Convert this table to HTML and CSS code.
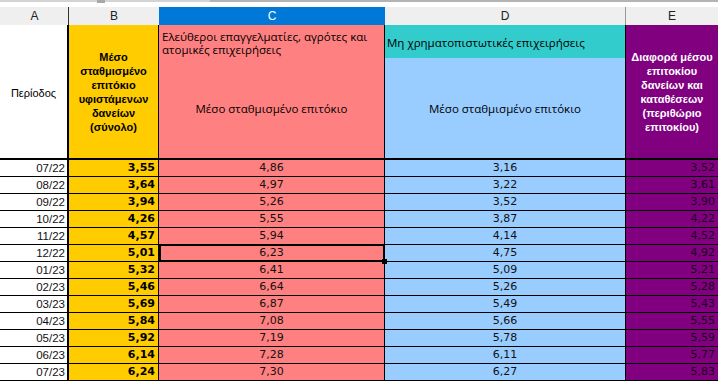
FILE: index.html
```html
<!DOCTYPE html>
<html lang="el">
<head>
<meta charset="utf-8">
<title>Επιτόκια</title>
<link rel="stylesheet" href="styles.css">
</head>
<body>
<div class="topbar">
  <span class="seg seg-a"></span><span class="seg seg-thumb"></span><span class="seg seg-b"></span><span class="seg seg-c"></span>
</div>
<div class="colheads">
  <div class="ch ch-a">A</div>
  <div class="ch ch-b">B</div>
  <div class="ch ch-c">C</div>
  <div class="ch ch-d">D</div>
  <div class="ch ch-e">E</div>
</div>
<div class="sheet">
  <div class="cell h-a">Περίοδος</div>
  <div class="cell h-b">Μέσο σταθμισμένο επιτόκιο υφιστάμενων δανείων (σύνολο)</div>
  <div class="cell h-c1">Ελεύθεροι επαγγελματίες, αγρότες και ατομικές επιχειρήσεις</div>
  <div class="cell h-d1">Μη χρηματοπιστωτικές επιχειρήσεις</div>
  <div class="cell h-e">Διαφορά μέσου επιτοκίου δανείων και καταθέσεων (περιθώριο επιτοκίου)</div>
  <div class="cell h-c2">Μέσο σταθμισμένο επιτόκιο</div>
  <div class="cell h-d2">Μέσο σταθμισμένο επιτόκιο</div>

  <div class="cell a">07/22</div><div class="cell b">3,55</div><div class="cell c">4,86</div><div class="cell d">3,16</div><div class="cell e">3,52</div>
  <div class="cell a">08/22</div><div class="cell b">3,64</div><div class="cell c">4,97</div><div class="cell d">3,22</div><div class="cell e">3,61</div>
  <div class="cell a">09/22</div><div class="cell b">3,94</div><div class="cell c">5,26</div><div class="cell d">3,52</div><div class="cell e">3,90</div>
  <div class="cell a">10/22</div><div class="cell b">4,26</div><div class="cell c">5,55</div><div class="cell d">3,87</div><div class="cell e">4,22</div>
  <div class="cell a">11/22</div><div class="cell b">4,57</div><div class="cell c">5,94</div><div class="cell d">4,14</div><div class="cell e">4,52</div>
  <div class="cell a">12/22</div><div class="cell b">5,01</div><div class="cell c selected">6,23</div><div class="cell d">4,75</div><div class="cell e">4,92</div>
  <div class="cell a">01/23</div><div class="cell b">5,32</div><div class="cell c">6,41</div><div class="cell d">5,09</div><div class="cell e">5,21</div>
  <div class="cell a">02/23</div><div class="cell b">5,46</div><div class="cell c">6,64</div><div class="cell d">5,26</div><div class="cell e">5,28</div>
  <div class="cell a">03/23</div><div class="cell b">5,69</div><div class="cell c">6,87</div><div class="cell d">5,49</div><div class="cell e">5,43</div>
  <div class="cell a">04/23</div><div class="cell b">5,84</div><div class="cell c">7,08</div><div class="cell d">5,66</div><div class="cell e">5,55</div>
  <div class="cell a">05/23</div><div class="cell b">5,92</div><div class="cell c">7,19</div><div class="cell d">5,78</div><div class="cell e">5,59</div>
  <div class="cell a">06/23</div><div class="cell b">6,14</div><div class="cell c">7,28</div><div class="cell d">6,11</div><div class="cell e">5,77</div>
  <div class="cell a">07/23</div><div class="cell b">6,24</div><div class="cell c">7,30</div><div class="cell d">6,27</div><div class="cell e">5,83</div>
</div>
</body>
</html>
```

FILE: styles.css
```css
* { box-sizing: border-box; }
html, body {
  margin: 0;
  padding: 0;
  background: #ffffff;
  overflow: hidden;
}
body {
  font-family: "Liberation Sans", Arial, sans-serif;
  color: #000;
}

.topbar {
  height: 7px;
  display: flex;
  align-items: flex-start;
}
.seg { display: block; height: 2px; }
.seg-a { width: 97px; background: #d4d4d4; }
.seg-thumb { width: 8px; height: 3px; background: #a8a8a8; }
.seg-b { width: 105px; background: #d4d4d4; }
.seg-c { flex: 1; background: #b4b4b4; }

.colheads {
  display: grid;
  grid-template-columns: 69px 90px 226px 241px 92px;
  height: 18px;
  background: #efefef;
  font-size: 12px;
  color: #222;
}
.ch {
  display: flex;
  align-items: center;
  justify-content: center;
  line-height: 18px;
}
.ch-a { border-right: 1px solid #333; padding-left: 1px; }
.ch-c { background: #0078d7; color: #fff; }
.ch-d { border-right: 1px solid #9a9a9a; }

.sheet {
  display: grid;
  grid-template-columns: 69px 90px 226px 241px 92px;
  grid-template-rows: 33px 102px repeat(13, 17px);
}
.cell {
  display: flex;
  align-items: center;
  border-right: 1px solid #000;
  border-bottom: 1px solid #000;
  white-space: nowrap;
}

.h-a {
  grid-row: 1 / 3;
  grid-column: 1;
  background: #fff;
  justify-content: center;
  font-size: 11px;
  border-right: 2px solid #000;
  border-bottom: 2px solid #000;
  padding-top: 2px;
}
.h-b {
  grid-row: 1 / 3;
  grid-column: 2;
  background: #ffcc00;
  justify-content: center;
  text-align: center;
  white-space: normal;
  font-weight: bold;
  font-size: 11px;
  line-height: 14px;
  padding: 0 6px;
  border-bottom: 2px solid #000;
}
.h-c1 {
  grid-row: 1;
  grid-column: 3;
  background: #ff8080;
  border-bottom: none;
  white-space: normal;
  align-items: center;
  font-family: "Open Sans", "Liberation Sans", sans-serif;
  font-size: 11.5px;
  line-height: 13px;
  padding: 2px 6px 0 3px;
}
.h-d1 {
  grid-row: 1;
  grid-column: 4;
  background: #33cccc;
  border-bottom: none;
  font-family: "Open Sans", "Liberation Sans", sans-serif;
  font-size: 11.5px;
  padding: 2px 0 0 2px;
}
.h-e {
  grid-row: 1 / 3;
  grid-column: 5;
  background: #800080;
  color: #fff;
  border-right: none;
  justify-content: center;
  text-align: center;
  white-space: normal;
  font-weight: bold;
  font-size: 11px;
  line-height: 14px;
  padding: 0 2px;
  border-bottom: 2px solid #000;
}
.h-c2 {
  grid-row: 2;
  grid-column: 3;
  background: #ff8080;
  justify-content: center;
  font-family: "Open Sans", "Liberation Sans", sans-serif;
  font-size: 11.5px;
  border-bottom: 2px solid #000;
  padding-top: 1px;
}
.h-d2 {
  grid-row: 2;
  grid-column: 4;
  background: #99ccff;
  justify-content: center;
  font-family: "Open Sans", "Liberation Sans", sans-serif;
  font-size: 11.5px;
  border-bottom: 2px solid #000;
  padding-top: 1px;
}

.a, .b, .c, .d, .e {
  font-family: "DejaVu Sans", Verdana, sans-serif;
  font-size: 11px;
  line-height: 16px;
}
.a {
  background: #fff;
  justify-content: flex-end;
  padding-right: 2px;
  border-right: 2px solid #000;
  font-family: "Liberation Sans", Arial, sans-serif;
  font-size: 11.5px;
  color: #111;
}
.b {
  background: #ffcc00;
  justify-content: flex-end;
  padding-right: 3px;
  font-weight: bold;
}
.c {
  background: #ff8080;
  justify-content: center;
  color: #111;
}
.d {
  background: #99ccff;
  justify-content: center;
  color: #111;
}
.e {
  background: #800080;
  justify-content: flex-end;
  padding-right: 3px;
  border-right: none;
  color: #1a001a;
}

.selected {
  position: relative;
}
.selected::before {
  content: "";
  position: absolute;
  left: 0;
  top: -1px;
  right: -1px;
  bottom: -1px;
  border: 2px solid #000;
}
.selected::after {
  content: "";
  position: absolute;
  right: -3px;
  bottom: -3px;
  width: 5px;
  height: 5px;
  background: #000;
}
```
